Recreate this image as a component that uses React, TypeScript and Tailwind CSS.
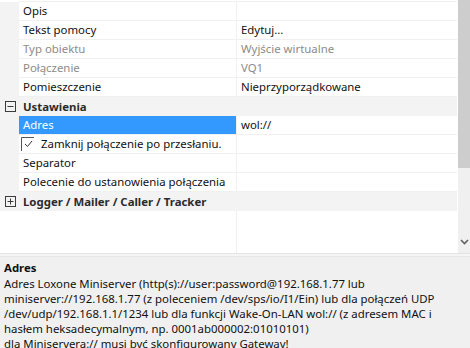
import React from "react";

type Row =
  | { kind: "prop"; name: string; value?: string; disabled?: boolean; selected?: boolean; check?: boolean }
  | { kind: "section"; name: string; expanded: boolean };

const rows: Row[] = [
  { kind: "prop", name: "Opis", value: "" },
  { kind: "prop", name: "Tekst pomocy", value: "Edytuj..." },
  { kind: "prop", name: "Typ obiektu", value: "Wyjście wirtualne", disabled: true },
  { kind: "prop", name: "Połączenie", value: "VQ1", disabled: true },
  { kind: "prop", name: "Pomieszczenie", value: "Nieprzyporządkowane" },
  { kind: "section", name: "Ustawienia", expanded: true },
  { kind: "prop", name: "Adres", value: "wol://", selected: true },
  { kind: "prop", name: "Zamknij połączenie po przesłaniu.", value: "", check: true },
  { kind: "prop", name: "Separator", value: "" },
  { kind: "prop", name: "Polecenie do ustanowienia połączenia", value: "" },
  { kind: "section", name: "Logger / Mailer / Caller / Tracker", expanded: false },
];

function BoxIcon({ expanded }: { expanded: boolean }) {
  return (
    <svg width="11" height="11" viewBox="0 0 11 11" className="block">
      <rect x="0.5" y="0.5" width="10" height="10" fill="none" stroke="#3c3c3c" />
      <line x1="2.5" y1="5.5" x2="8.5" y2="5.5" stroke="#3c3c3c" />
      {!expanded && <line x1="5.5" y1="2.5" x2="5.5" y2="8.5" stroke="#3c3c3c" />}
    </svg>
  );
}

function CheckIcon() {
  return (
    <svg width="14" height="14" viewBox="0 0 14 14" className="block">
      <path d="M0.5 14 V0.5 H13" fill="none" stroke="#555" />
      <path d="M4 7 L6.5 9.5 L11 4" fill="none" stroke="#333" strokeWidth="1" />
    </svg>
  );
}

export default function App() {
  return (
    <div
      className="w-[470px] h-[348px] overflow-hidden bg-[#f0f0f0] flex flex-col text-[11.4px] text-black"
      style={{ fontFamily: '"Noto Sans", "Open Sans", sans-serif' }}
    >
      <div className="h-[253px] flex shrink-0">
        <div className="flex-1 bg-white flex flex-col relative">
          <div className="h-[2px] border-b border-[#f0f0f0] ml-[19px]" />
          {rows.map((r, i) =>
            r.kind === "section" ? (
              <div key={i} className="h-[19px] bg-[#f3f3f3] flex items-center">
                <div className="w-[19px] flex justify-center pl-[1px]">
                  <BoxIcon expanded={r.expanded} />
                </div>
                <span className="pl-[4px] font-bold text-[#2b2b2b] leading-none">{r.name}</span>
              </div>
            ) : (
              <div key={i} className="h-[19px] flex">
                <div className="w-[19px] bg-[#f3f3f3]" />
                <div className="flex-1 flex border-b border-[#f0f0f0]">
                  <div
                    className={
                      "w-[217px] flex items-center pl-[4px] whitespace-nowrap overflow-hidden " +
                      (r.selected ? "bg-[#3399ff] text-white" : r.disabled ? "text-[#8c8c8c]" : "text-[#111]")
                    }
                  >
                    {r.check && (
                      <span className="mr-[6px] -ml-[2px]">
                        <CheckIcon />
                      </span>
                    )}
                    <span className="leading-none">{r.name}</span>
                  </div>
                  <div className="w-[1px] bg-[#f0f0f0]" />
                  <div
                    className={
                      "flex-1 flex items-center pl-[4px] whitespace-nowrap " +
                      (r.disabled ? "text-[#8c8c8c]" : "text-[#111]")
                    }
                  >
                    <span className="leading-none">{r.value}</span>
                  </div>
                </div>
              </div>
            )
          )}
          <div className="flex-1 flex">
            <div className="w-[236px]" />
            <div className="w-[1px] bg-[#f0f0f0]" />
            <div className="flex-1" />
          </div>
        </div>
        <div className="w-[13px] bg-[#f0f0f0] flex flex-col border-l border-white">
          <div className="h-[168px] bg-[#cdcdcd]" />
          <div className="flex-1" />
          <div className="h-[16px] flex items-center justify-center mb-[3px]">
            <svg width="9" height="6" viewBox="0 0 9 6">
              <path d="M1 1 L4.5 4.5 L8 1" fill="none" stroke="#606060" strokeWidth="1.6" />
            </svg>
          </div>
        </div>
      </div>
      <div className="h-[3px] border-t border-[#e3e3e3] bg-[#f5f5f5] shrink-0" />
      <div className="flex-1 border-t border-[#e6e6e6] bg-[#f0f0f0] pl-[4px] pt-[3px] leading-[15px] text-[#111]">
        <div className="font-bold leading-[16px]">Adres</div>
        <div>
          Adres Loxone Miniserver (http(s)://user:password@192.168.1.77 lub
          <br />
          miniserver://192.168.1.77 (z poleceniem /dev/sps/io/I1/Ein) lub dla połączeń UDP
          <br />
          /dev/udp/192.168.1.1/1234 lub dla funkcji Wake-On-LAN wol:// (z adresem MAC i
          <br />
          hasłem heksadecymalnym, np. 0001ab000002:01010101)
          <br />
          dla Miniservera:// musi być skonfigurowany Gateway!
        </div>
      </div>
    </div>
  );
}
